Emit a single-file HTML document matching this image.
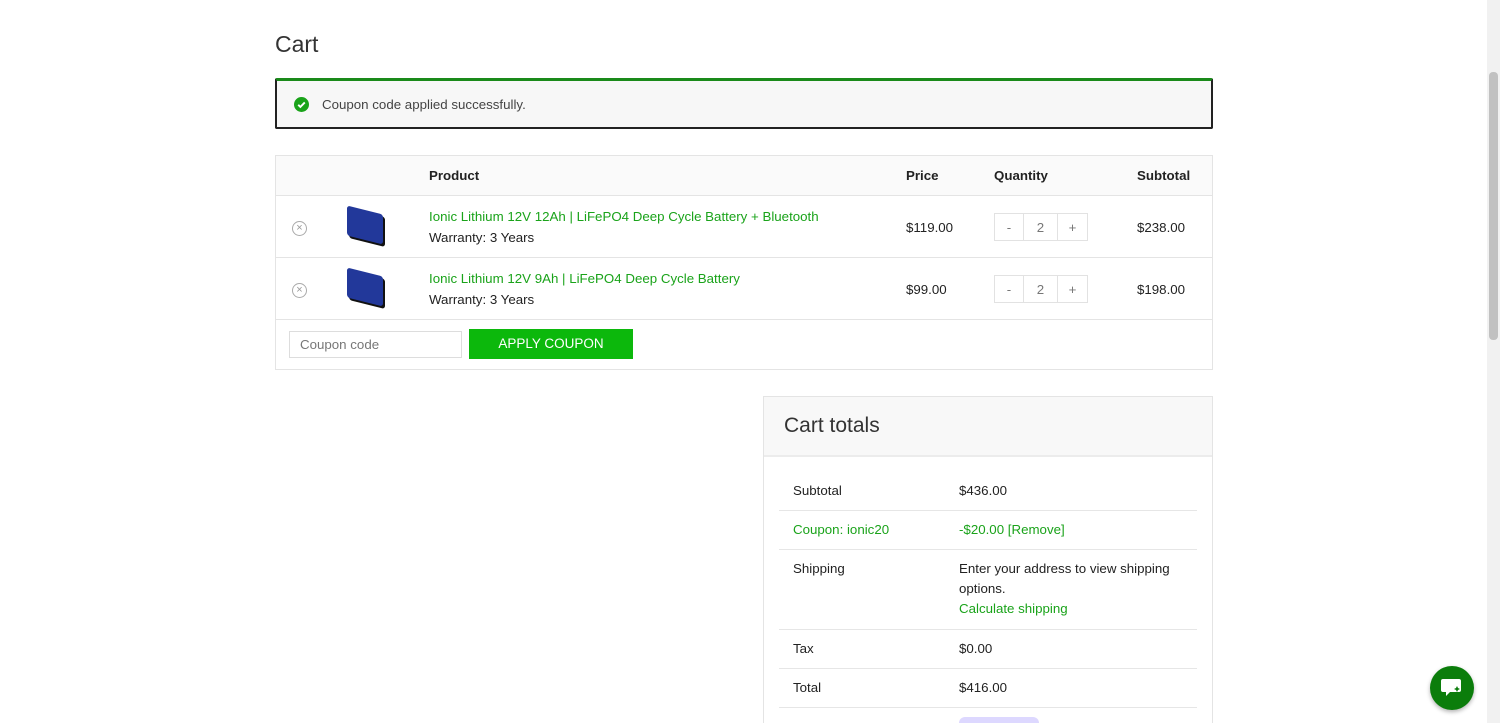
<!DOCTYPE html>
<html><head><style>
*{box-sizing:border-box;margin:0;padding:0}
html,body{width:1500px;height:723px;overflow:hidden}
body{background:#fff;font-family:"Liberation Sans",sans-serif;font-size:13.3px;color:#222;position:relative}
.abs{position:absolute}
h1{position:absolute;left:275px;top:31px;font-size:23px;font-weight:normal;color:#333}
.notice{left:275px;top:78px;width:938px;height:51px;border:2px solid #222;border-top:3px solid #1a8a1a;background:#f7f7f7;border-radius:2px}
.notice span{position:absolute;left:45px;top:16px;color:#444}
.tbl{left:275px;top:155px;width:938px;height:215px;border:1px solid #e4e4e4}
.hdr{left:0;top:0;width:936px;height:40px;background:#fafafa;border-bottom:1px solid #e4e4e4}
.row{left:0;width:936px;height:62px;border-bottom:1px solid #e4e4e4}
.g{color:#1aa31a}
.b{font-weight:bold}
.qty{width:94px;height:28px;border:1px solid #e2e2e2;display:flex;color:#777}
.qty div{display:flex;align-items:center;justify-content:center}
.x{width:15px;height:15px;border:1px solid #aaa;border-radius:50%;color:#999;font-size:11px;line-height:13px;text-align:center}
.batt{width:36px;height:30px;background:#22389a;border-radius:3px;transform:skewY(14deg);box-shadow:2px 2px 0 #111}
.tot{left:763px;top:396px;width:450px;height:340px;border:1px solid #e4e4e4}
.tr{left:15px;width:418px;border-bottom:1px solid #e6e6e6}
.tr .l{position:absolute;left:14px}
.tr .r{position:absolute;left:180px;line-height:20px}
</style></head><body>
<h1>Cart</h1>
<div class="abs notice"><svg class="abs" style="left:17px;top:16px" width="15" height="15" viewBox="0 0 16 16"><circle cx="8" cy="8" r="8" fill="#1aa31a"/><path d="M4.5 8.3l2.3 2.3 4.7-4.8" stroke="#fff" stroke-width="2" fill="none"/></svg><span>Coupon code applied successfully.</span></div>
<div class="abs tbl">
 <div class="abs hdr b"><span class="abs" style="left:153px;top:12px">Product</span><span class="abs" style="left:630px;top:12px">Price</span><span class="abs" style="left:718px;top:12px">Quantity</span><span class="abs" style="left:861px;top:12px">Subtotal</span></div>
 <div class="abs row" style="top:40px">
  <div class="abs x" style="left:16px;top:25px">×</div>
  <div class="abs batt" style="left:71px;top:14px"></div>
  <span class="abs g" style="left:153px;top:13px">Ionic Lithium 12V 12Ah | LiFePO4 Deep Cycle Battery + Bluetooth</span>
  <span class="abs" style="left:153px;top:34px">Warranty: 3 Years</span>
  <span class="abs" style="left:630px;top:24px">$119.00</span>
  <div class="abs qty" style="left:718px;top:17px"><div style="width:29px;border-right:1px solid #e2e2e2">-</div><div style="width:34px;border-right:1px solid #e2e2e2">2</div><div style="width:29px">+</div></div>
  <span class="abs" style="left:861px;top:24px">$238.00</span>
 </div>
 <div class="abs row" style="top:102px">
  <div class="abs x" style="left:16px;top:25px">×</div>
  <div class="abs batt" style="left:71px;top:14px"></div>
  <span class="abs g" style="left:153px;top:13px">Ionic Lithium 12V 9Ah | LiFePO4 Deep Cycle Battery</span>
  <span class="abs" style="left:153px;top:34px">Warranty: 3 Years</span>
  <span class="abs" style="left:630px;top:24px">$99.00</span>
  <div class="abs qty" style="left:718px;top:17px"><div style="width:29px;border-right:1px solid #e2e2e2">-</div><div style="width:34px;border-right:1px solid #e2e2e2">2</div><div style="width:29px">+</div></div>
  <span class="abs" style="left:861px;top:24px">$198.00</span>
 </div>
 <div class="abs" style="left:13px;top:175px;width:173px;height:27px;border:1px solid #ddd;color:#777;padding:5px 10px">Coupon code</div>
 <div class="abs" style="left:193px;top:173px;width:164px;height:30px;background:#0cb80c;color:#fff;text-align:center;line-height:30px;font-size:13.5px">APPLY COUPON</div>
</div>
<div class="abs tot">
 <div class="abs" style="left:0;top:0;width:448px;height:60px;background:#f8f8f8;border-bottom:2px solid #ececec"><span class="abs" style="left:20px;top:17px;font-size:21px;color:#333">Cart totals</span></div>
 <div class="abs tr" style="top:74px;height:40px"><span class="l" style="top:12px">Subtotal</span><span class="r" style="top:10px">$436.00</span></div>
 <div class="abs tr g" style="top:114px;height:39px"><span class="l" style="top:11px">Coupon: ionic20</span><span class="r" style="top:9px">-$20.00 [Remove]</span></div>
 <div class="abs tr" style="top:153px;height:80px"><span class="l" style="top:11px">Shipping</span><span class="r" style="top:9px">Enter your address to view shipping<br>options.<br><span class="g">Calculate shipping</span></span></div>
 <div class="abs tr" style="top:233px;height:39px"><span class="l" style="top:11px">Tax</span><span class="r" style="top:9px">$0.00</span></div>
 <div class="abs tr" style="top:272px;height:39px"><span class="l" style="top:11px">Total</span><span class="r" style="top:9px">$416.00</span></div>
 <div class="abs" style="left:195px;top:320px;width:80px;height:12px;background:#ddd8ff;border-radius:6px"></div>
</div>
<div class="abs" style="left:1430px;top:666px;width:44px;height:44px;border-radius:50%;background:#0b7d0b;box-shadow:0 2px 4px rgba(0,0,0,.3)"><svg class="abs" style="left:11px;top:12px" width="22" height="20" viewBox="0 0 22 20"><path d="M2 1h16a2 2 0 0 1 2 2v9a2 2 0 0 1-2 2H9l-4 4v-4H2a2 2 0 0 1-2-2V3a2 2 0 0 1 2-2z" fill="#fff"/><path d="M16 8l1 2 2 1-2 1-1 2-1-2-2-1 2-1z" fill="#0b7d0b"/></svg></div>
<div class="abs" style="left:1487px;top:0;width:13px;height:723px;background:#f1f1f1"><div class="abs" style="left:2px;top:72px;width:9px;height:268px;background:#c1c1c1;border-radius:4px"></div></div>
</body></html>
